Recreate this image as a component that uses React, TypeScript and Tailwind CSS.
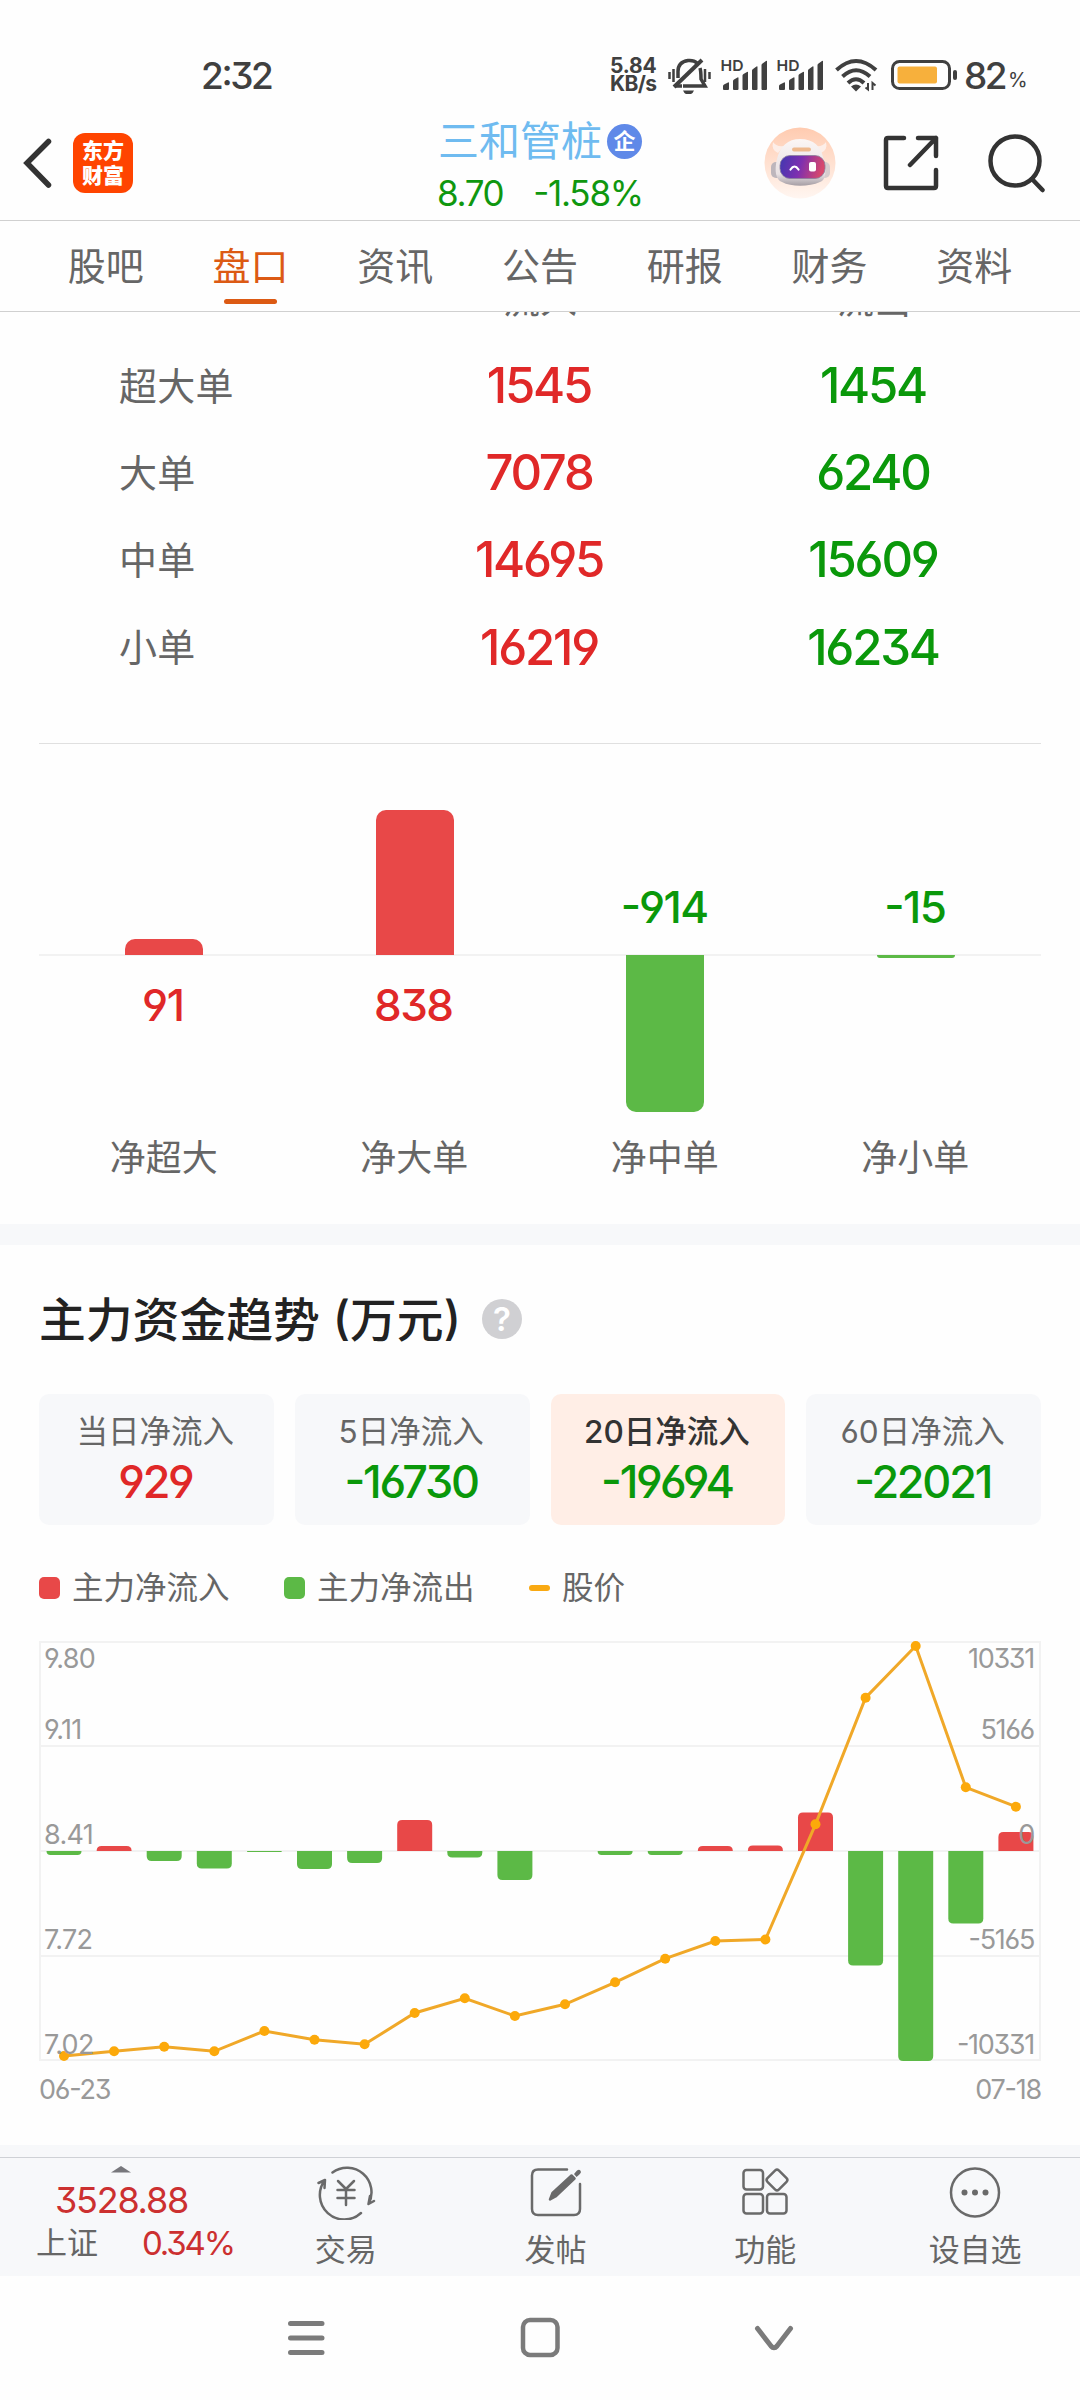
import type { ReactNode } from 'react';

const TABS = ['股吧', '盘口', '资讯', '公告', '研报', '财务', '资料'];

const ORDERS = [
   { label: '超大单', inflow: '1545', outflow: '1454' },
   { label: '大单', inflow: '7078', outflow: '6240' },
   { label: '中单', inflow: '14695', outflow: '15609' },
   { label: '小单', inflow: '16219', outflow: '16234' },
];

const NETS = [
   { label: '净超大', value: 91, height: 16 },
   { label: '净大单', value: 838, height: 145 },
   { label: '净中单', value: -914, height: 157 },
   { label: '净小单', value: -15, height: 3 },
];

const PERIODS = [
   { label: '当日净流入', value: '929', up: true },
   { label: '5日净流入', value: '-16730' },
   { label: '20日净流入', value: '-19694', active: true },
   { label: '60日净流入', value: '-22021' },
];

// signed bar heights, in chart units
const FLOWS = [-4, 5, -10, -17.5, -1, -18, -12, 31, -6.5, -29, 0.1, -4, -4, 5, 5.5, 38.5, -114.5, -210, -72.5, 19];
const PRICES = [415, 410.3, 405.7, 410.3, 390, 398.7, 403.3, 372, 357.3, 375, 363.3, 341.3, 317.7, 300, 298.5, 183.3, 56.7, 5, 146.3, 165.7];

const GRID = [
   { y: 1, textY: 27, price: '9.80', flow: '10331' },
   { y: 105, textY: 98, price: '9.11', flow: '5166' },
   { y: 210, textY: 203, price: '8.41', flow: '0' },
   { y: 315, textY: 308, price: '7.72', flow: '-5165' },
   { y: 419, textY: 413, price: '7.02', flow: '-10331' },
];

const pointX = (i: number) => 25 + i * 50.1;

const barPath = (x: number, zero: number, size: number, width: number, radius: number) => {
   const r = Math.min(radius, Math.abs(size));
   const s = Math.sign(size);
   const end = zero - size;
   return `M${x} ${zero}V${end + s * r}Q${x} ${end} ${x + r} ${end}H${x + width - r}Q${x + width} ${end} ${x + width} ${end + s * r}V${zero}Z`;
};

const Signal = () => (
   <svg width="46" height="32" viewBox="0 0 46 32" fill="#404040" className="overflow-visible">
      <text x="-0.5" y="11.500" fontSize="15" fontWeight="600" textLength="23" lengthAdjust="spacingAndGlyphs">HD</text>
      <path d="M2 30v-3q0-1 1-1.500l4-2q1-.5 1 .5v6q0 1-1 1h-4q-1 0-1-1zM12 30v-8q0-1 1-1.500l3.500-2q1-.5 1 .5v11q0 1-1 1h-3.500q-1 0-1-1zM21.500 30v-13.500q0-1 1-1.500l3.500-2q1-.5 1 .5v16.500q0 1-1 1h-3.500q-1 0-1-1zM31 30v-18.500q0-1 1-1.500l3.500-2.500q1-.5 1 .5v22q0 1-1 1h-3.500q-1 0-1-1zM40.500 30v-24q0-1 1-1.500l3.500-2.500q1-.5 1 .5v27.500q0 1-1 1h-3.500q-1 0-1-1z" />
   </svg>
);

const StatusBar = () => (
   <div className="flex h-[110px] items-center pt-[40px] pl-[201px] text-[#404040]">
      <span className="w-[409px] text-[37px] leading-none font-medium tracking-[-0.065em]">2:32</span>
      <div className="w-[58px] text-[21px] leading-[18.500px] font-bold">
         <div className="tracking-[-0.01em]">5.84</div>
         <div className="tracking-[-0.03em]">KB/s</div>
      </div>
      <svg width="43" height="38" viewBox="0 0 43 38" fill="none" stroke="#404040" strokeWidth="3.500" className="mr-[10px]">
         <path d="M10 22V15.500Q10 6 20 4.500Q26 4 29 7M32 12Q33 15 33 23L37 30H15M14 30H8" />
         <path d="M34 4L6 31" strokeWidth="4" />
         <path d="M15 34.500h11q-1.500 4-5.500 4t-5.500-4z" fill="#404040" stroke="none" />
         <path d="M1.500 16v7M5.500 13v13M37 13v13M41.500 16v7" strokeWidth="2.500" />
      </svg>
      <div className="mr-[12px] flex gap-[10px]">
         <Signal />
         <Signal />
      </div>
      <svg width="43" height="34" viewBox="0 0 43 34" fill="none" stroke="#404040" strokeWidth="4">
         <path d="M1.500 12Q21 -6 41 12M7.500 18.500Q21 6 35 18.500M13 25Q21 17.500 29 25" />
         <path d="M16 28.500q5-4 10 0l-5 5z" fill="#404040" stroke="none" />
         <path d="M33 25v6.500l-2.500-2M37.500 32v-7l3 2.500" strokeWidth="2" />
      </svg>
      <svg width="67" height="31" viewBox="0 0 67 31" className="ml-[13px]">
         <rect x="1.500" y="1.500" width="57" height="27" rx="7" fill="none" stroke="#404040" strokeWidth="3" />
         <rect x="6.500" y="6.500" width="39.500" height="17" rx="2" fill="#f7b03c" />
         <rect x="62" y="10" width="4" height="10" rx="2" fill="#404040" />
      </svg>
      <span className="ml-[6px] text-[37px] leading-none font-medium tracking-[-0.07em]">82</span>
      <span className="ml-[3px] pt-[10px] text-[20px] leading-none tracking-tight">%</span>
   </div>
);

const Robot = () => (
   <svg width="72" height="72" viewBox="0 0 72 72">
      <defs>
         <linearGradient id="halo" x1="0" y1="0" x2="0" y2="1">
            <stop offset="0" stopColor="#ffcbb0" />
            <stop offset="1" stopColor="#fff6f1" />
         </linearGradient>
         <linearGradient id="shell" x1="0" y1="0" x2="0" y2="1">
            <stop offset="0" stopColor="#fbf6f5" />
            <stop offset="0.75" stopColor="#e8e1e3" />
            <stop offset="1" stopColor="#a59da4" />
         </linearGradient>
         <linearGradient id="visor" x1="0" y1="0" x2="1" y2="0.15">
            <stop offset="0" stopColor="#4038b0" />
            <stop offset="0.500" stopColor="#7d2fb0" />
            <stop offset="1" stopColor="#d8486c" />
         </linearGradient>
      </defs>
      <circle cx="36" cy="36" r="35.500" fill="url(#halo)" />
      <path d="M9 15Q7 23 14 26L20 19Q12 20 9 15ZM62 15Q64 23 57 26L51 19Q59 20 62 15Z" fill="#fdeee8" />
      <rect x="7" y="35" width="11" height="16" rx="5" fill="#bdb6bc" />
      <rect x="56" y="35" width="10" height="16" rx="5" fill="#d6cccd" />
      <path d="M36 12C50 12 57 20 59 30C63 44 62 53 56 55C45 60 27 60 18 55C12 53 10 44 13 32C16 19 24 12 36 12Z" fill="url(#shell)" />
      <rect x="28" y="20.500" width="19" height="4" rx="2" fill="#eeb98f" />
      <rect x="16" y="28.500" width="45" height="23" rx="10" fill="url(#visor)" stroke="#8a7f9c" strokeWidth="0.800" />
      <path d="M26.500 42.500q4-6 8 0" fill="none" stroke="#fff" strokeWidth="2.200" strokeLinecap="round" />
      <rect x="45" y="35" width="7" height="9.500" rx="2" fill="#fff" />
   </svg>
);

const Header = () => (
   <header className="grid h-[111px] grid-cols-[360px_1fr_360px] border-b border-[#d0d0d0]">
      <div className="flex items-center pb-[5px] pl-[22px]">
         <svg width="32" height="52" viewBox="0 0 32 52" fill="none" stroke="#333" strokeWidth="5.500" strokeLinecap="round">
            <path d="M26.500 4.500L5 26L26.500 48" strokeLinejoin="miter" />
         </svg>
         <div className="ml-[19px] flex h-[60px] w-[60px] flex-col items-center justify-center rounded-[12px] bg-[#ff4400] text-[21px] leading-[25px] font-black text-white">
            <span>东方</span>
            <span>财富</span>
         </div>
      </div>

      <div className="flex flex-col items-center">
         <div className="flex h-[62px] items-center gap-[5px] text-[41px] leading-none text-[#6fbbf0]">
            三和管桩
            <span className="grid h-[35px] w-[35px] place-items-center rounded-full bg-[#5f89e8] text-[22px] leading-none font-bold text-white">企</span>
         </div>
         <div className="flex h-[43px] w-[206px] items-center justify-between text-[35px] leading-none text-[#0f970f]">
            <span className="tracking-[-0.04em]">8.70</span>
            <span className="tracking-[-0.035em]">-1.58%</span>
         </div>
      </div>

      <div className="flex items-center pb-[5px] pl-[44px]">
         <Robot />
         <svg width="56" height="58" viewBox="0 0 56 58" fill="none" stroke="#333" strokeWidth="4.500" strokeLinecap="round" strokeLinejoin="round" className="ml-[47px]">
            <path d="M21 4H5Q3 4 3 6V52Q3 54 5 54H51Q53 54 53 52V36M35 4H53V22M53 4L27 31" />
         </svg>
         <svg width="58" height="60" viewBox="0 0 58 60" fill="none" stroke="#333" strokeWidth="4.500" strokeLinecap="round" className="ml-[49px]">
            <circle cx="27" cy="28" r="24.500" />
            <path d="M44 46L54.500 57" />
         </svg>
      </div>
   </header>
);

const Tabs = () => (
   <nav className="grid h-[91px] grid-cols-7 border-b border-[#d0d0d0] px-[33.500px] text-[38px] text-[#666]">
      {TABS.map(tab => (
         <div key={tab} className={tab === '盘口' ? 'flex flex-col items-center text-[#dc5a14]' : 'flex flex-col items-center'}>
            <span className="mt-[23px] h-[55px] leading-[44px]">{tab}</span>
            {tab === '盘口' && <i className="h-[5px] w-[53px] rounded-full bg-[#dc5a14]" />}
         </div>
      ))}
   </nav>
);

const Orders = () => (
   <section className="mx-[39px] h-[432px] overflow-hidden border-b border-[#e0e0e0]">
      <div className="-mt-[32px] grid h-[62px] grid-cols-[334px_334px_334px] text-center text-[37px] leading-[42px] text-[#666]">
         <span />
         <span>流入</span>
         <span>流出</span>
      </div>
      {ORDERS.map(order => (
         <div key={order.label} className="grid h-[87.200px] grid-cols-[334px_334px_334px] items-center text-center text-[49px] leading-none font-medium tracking-[-0.045em]">
            <span className="pl-[80px] text-left text-[38px] font-normal tracking-[0.005em] text-[#666]">{order.label}</span>
            <span className="pr-[2px] text-[#e02828]">{order.inflow}</span>
            <span className="pr-[2px] text-[#0a980a]">{order.outflow}</span>
         </div>
      ))}
   </section>
);

const NetBars = () => (
   <section className="mx-[39px] h-[480px]">
      <div className="relative grid h-[390px] grid-cols-4">
         <div className="absolute top-[210px] h-[2px] w-full bg-[#f2f2f2]" />
         {NETS.map(net => {
            const up = net.value > 0;
            return (
               <div key={net.label} className="relative flex h-[390px] flex-col items-center text-[44px] leading-none font-medium tracking-[-0.035em]">
                  <div className="flex h-[211px] flex-col items-center justify-end">
                     {up ? (
                        <div className="w-[78px] rounded-t-[10px] bg-[#e84848]" style={{ height: net.height }} />
                     ) : (
                        <span className="mb-[26px] pr-[2px] text-[#0a980a]">{net.value}</span>
                     )}
                  </div>
                  {up ? (
                     <span className="mt-[28px] pr-[3px] text-[#e02828]">{net.value}</span>
                  ) : (
                     <div className="w-[78px] rounded-b-[10px] bg-[#5cb946]" style={{ height: net.height }} />
                  )}
               </div>
            );
         })}
      </div>
      <div className="grid grid-cols-4 text-center text-[36px] leading-[48px] text-[#666]">
         {NETS.map(net => (
            <span key={net.label} className="pr-px">{net.label}</span>
         ))}
      </div>
   </section>
);

const Periods = () => (
   <div className="grid h-[131px] grid-cols-4 gap-[21px]">
      {PERIODS.map(period => (
         <div
            key={period.label}
            className={`flex flex-col items-center rounded-[10px] pt-[15px] pr-[2px] ${period.active ? 'bg-[#ffeee6]' : 'bg-[#f7f8fa]'}`}
         >
            <span className={`text-[31.500px] leading-[46px] ${period.active ? 'font-medium text-[#333]' : 'text-[#666]'}`}>{period.label}</span>
            <span className={`text-[45px] leading-[54px] font-medium tracking-[-0.05em] ${period.up ? 'text-[#e02828]' : 'text-[#0a980a]'}`}>{period.value}</span>
         </div>
      ))}
   </div>
);

const Legend = () => (
   <div className="flex h-[116px] items-center pt-[9px] text-[31.500px] leading-none text-[#666]">
      <i className="mr-[12px] h-[22px] w-[21px] rounded-[5px] bg-[#e84848]" />
      <span className="w-[212px]">主力净流入</span>
      <i className="mr-[12px] h-[22px] w-[21px] rounded-[5px] bg-[#5cb946]" />
      <span className="w-[212px]">主力净流出</span>
      <i className="mr-[12px] h-[6px] w-[21px] rounded-full bg-[#f9a912]" />
      <span>股价</span>
   </div>
);

const TrendChart = () => (
   <>
      <svg width="1002" height="421" viewBox="0 0 1002 421" className="block">
         <g stroke="#f2f2f2" strokeWidth="2">
            {GRID.map(row => (
               <path key={row.y} d={`M0 ${row.y}H1002`} />
            ))}
            <path d="M1 0V420M1001 0V420" />
         </g>
         {FLOWS.map((flow, i) => (
            <path key={i} d={barPath(pointX(i) - 17.5, 210, flow, 35, 5)} fill={flow > 0 ? '#e84848' : '#5cb946'} />
         ))}
         <polyline points={PRICES.map((y, i) => `${pointX(i)},${y}`).join(' ')} fill="none" stroke="#f0a828" strokeWidth="3" />
         {PRICES.map((y, i) => (
            <circle key={i} cx={pointX(i)} cy={y} r="5" fill="#fca90a" />
         ))}
         <g fill="#999" fontSize="27">
            {GRID.map(row => (
               <g key={row.y}>
                  <text x="5" y={row.textY} letterSpacing="-0.700">{row.price}</text>
                  <text x="995" y={row.textY} textAnchor="end" letterSpacing="-1.300">{row.flow}</text>
               </g>
            ))}
         </g>
      </svg>
      <div className="flex justify-between pt-[8px] text-[27px] leading-[40px] tracking-[-0.045em] text-[#999]">
         <span>06-23</span>
         <span>07-18</span>
      </div>
   </>
);

const Trend = () => (
   <section className="h-[900px] px-[39px] pt-[45px]">
      <div className="flex h-[104px] items-start text-[46.800px] leading-[60px] font-medium text-[#222]">
         主力资金趋势
         <span className="ml-[13px]">(万元)</span>
         <span className="mt-[9px] ml-[21px] grid h-[40px] w-[40px] place-items-center rounded-full bg-[#d0d0d3] text-[33px] leading-none font-semibold text-white">?</span>
      </div>
      <Periods />
      <Legend />
      <TrendChart />
   </section>
);

const Action = ({ label, children }: { label: string; children: ReactNode }) => (
   <div className="flex w-[209.800px] flex-col items-center text-[31px] leading-[40px] text-[#666]">
      <svg width="60" height="54" viewBox="0 0 60 54" fill="none" stroke="#6a6a6a" strokeWidth="2.500" strokeLinecap="round" strokeLinejoin="round" className="mt-[8px] mb-[10px]">
         {children}
      </svg>
      {label}
   </div>
);

const BottomBar = () => (
   <footer className="flex h-[119px] border-t border-[#cfd1d6] bg-[#f7f8fa]">
      <div className="flex w-[241px] flex-col">
         <svg width="20" height="7" viewBox="0 0 20 7" fill="#77777c" className="mt-[8px] ml-[111px]">
            <path d="M0 6.500L10 0L20 6.500Z" />
         </svg>
         <span className="mt-[6px] ml-[55px] text-[36px] leading-[42px] tracking-[-0.035em] text-[#cc3030]">3528.88</span>
         <div className="mt-px flex justify-between pr-[7px] pl-[36px] text-[31px] leading-[42px] text-[#666]">
            <span>上证</span>
            <span className="text-[33px] tracking-[-0.065em] text-[#cc3030]">0.34%</span>
         </div>
      </div>
      <Action label="交易">
         <path d="M16.500 6.500A24.500 24.500 0 0 1 52.500 38L58 35M45 47A24.500 24.500 0 0 1 9 14L2.500 17M9 14L8.500 22M52.500 38L54 30" />
         <path d="M22 15L30 23L38 15M21.500 24H38.500M21.500 32H38.500M30 24V39" />
      </Action>
      <Action label="发帖">
         <path d="M41 3.500H12Q6 3.500 6 9.500V43Q6 49 12 49H48Q54 49 54 43V18" />
         <path d="M24 33.500L26.500 27L45.500 9.500L48.500 12.500L29.500 30.500Z" fill="#6a6a6a" />
         <path d="M48 8L51 4.500Q54 2.500 55 6Q54.500 8 50.500 11Z" fill="#6a6a6a" stroke="none" />
      </Action>
      <Action label="功能">
         <rect x="8.500" y="4" width="19.500" height="19.500" rx="3" />
         <rect x="8.500" y="28" width="19.500" height="19.500" rx="3" />
         <rect x="32" y="28" width="19.500" height="19.500" rx="3" />
         <rect x="34" y="6" width="16" height="16" rx="2.500" transform="rotate(45 42 14)" />
      </Action>
      <Action label="设自选">
         <circle cx="30" cy="26.500" r="24" />
         <g fill="#6a6a6a" stroke="none">
            <circle cx="19.500" cy="26.500" r="3" />
            <circle cx="30" cy="26.500" r="3" />
            <circle cx="40.500" cy="26.500" r="3" />
         </g>
      </Action>
   </footer>
);

const SystemNav = () => (
   <div className="flex h-[124px] items-start justify-center gap-[192px] pt-[40px]">
      <svg width="42" height="44" viewBox="0 0 42 44" stroke="#7b7b7b" strokeWidth="5" strokeLinecap="round">
         <path d="M5.500 7.500H37M5.500 22H37M5.500 36.500H37" />
      </svg>
      <svg width="42" height="44" viewBox="0 0 42 44" fill="none" stroke="#7b7b7b" strokeWidth="4.500">
         <rect x="4" y="4" width="34.500" height="35" rx="7" />
      </svg>
      <svg width="42" height="44" viewBox="0 0 42 44" fill="none" stroke="#7b7b7b" strokeWidth="5" strokeLinecap="round">
         <path d="M4.500 12.500L18 30Q21 33.500 24 30L37.500 12.500" />
      </svg>
   </div>
);

const App = () => {
   return (
      <div className="h-[2400px] w-[1080px] overflow-hidden bg-[#fefefe] font-['Inter','Noto_Sans_CJK_SC',sans-serif] [font-feature-settings:'cv03','cv04','cv09','case']">
         <StatusBar />
         <Header />
         <Tabs />
         <Orders />
         <NetBars />
         <div className="h-[21px] bg-[#f7f8fa]" />
         <Trend />
         <div className="h-[12px] bg-[#f7f8fa]" />
         <BottomBar />
         <SystemNav />
      </div>
   );
};

export default App;
